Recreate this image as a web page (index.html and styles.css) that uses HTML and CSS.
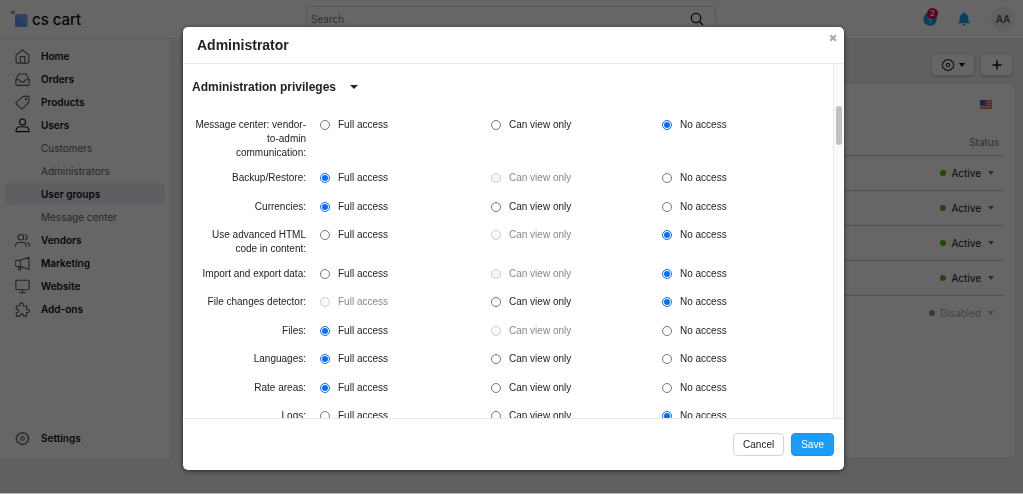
FILE: index.html
```html
<!DOCTYPE html>
<html lang="en">
<head>
  <meta charset="UTF-8" />
  <meta name="viewport" content="width=device-width, initial-scale=1.0" />
  <title>User groups - Administrator</title>
  <link rel="stylesheet" href="styles.css">
</head>
<body>
  <header class="topbar">
    <a class="logo" href="#">
      <svg class="logo-mark" viewBox="0 0 17 18" aria-hidden="true">
        <defs>
          <linearGradient id="mark" x1="0" y1="1" x2="1" y2="0">
            <stop offset="0" stop-color="#6287f5" />
            <stop offset="1" stop-color="#7cb8f8" />
          </linearGradient>
        </defs>
        <rect x="4" y="4" width="12.5" height="13" rx="1.5" fill="url(#mark)" />
        <circle cx="2" cy="2.3" r="1.9" fill="#6d8ffa" />
      </svg>
      <span>cs cart</span>
    </a>
    <form class="search">
      <input type="text" placeholder="Search" aria-label="Search" />
      <svg class="search-icon" viewBox="0 0 14 14" aria-hidden="true"><circle cx="6" cy="6" r="4.7" /><path d="M9.5 9.5l3.5 3.5" /></svg>
    </form>
    <div class="top-actions">
      <button class="icon-btn" aria-label="Help">
        <svg width="14" height="14" viewBox="0 0 14 14" aria-hidden="true">
          <circle cx="7" cy="7" r="6.7" fill="#1b9bf0" />
          <path d="M5.3 5.6a1.8 1.8 0 1 1 2.6 1.6c-.7.4-.9.6-.9 1.2M7 9.8v1.2" fill="none" stroke="#fff" stroke-width="1.3" />
        </svg>
        <span class="badge">2</span>
      </button>
      <button class="icon-btn" aria-label="Notifications">
        <svg width="12" height="14" viewBox="0 0 12 14" aria-hidden="true">
          <path d="M6 .5c.6 0 1 .4 1 1v.3c1.9.4 3.2 1.9 3.2 3.9 0 2.6.5 3.6 1.6 4.7v.8H.2v-.8c1.1-1.1 1.6-2.1 1.6-4.7 0-2 1.3-3.5 3.2-3.9v-.3c0-.6.4-1 1-1zM4.5 12h3c-.1.9-.7 1.5-1.5 1.5S4.6 12.900 4.500 12z" fill="#1b9bf0" />
        </svg>
      </button>
      <button class="avatar">AA</button>
    </div>
  </header>

  <div class="layout">
    <nav class="sidebar">
      <a class="nav-item" href="#"><svg viewBox="0 0 14 14"><path d="M1 5.600L7 .8l6 4.800v6.200a1.400 1.400 0 0 1-1.400 1.400H2.400A1.400 1.400 0 0 1 1 11.800zM4.900 13V7h4.200V13" /></svg>Home</a>
      <a class="nav-item" href="#"><svg viewBox="0 0 14 14"><path d="M.8 7.200h3.400l1.200 2h3.200l1.200-2h3.400M3.500 1.800h7l2.700 5.400v4a1.300 1.300 0 0 1-1.300 1.300H2.100a1.300 1.300 0 0 1-1.300-1.300v-4z" /></svg>Orders</a>
      <a class="nav-item" href="#"><svg viewBox="0 0 14 14"><path d="M7.600 1.300L13 1v5.500l-5.800 6.300a1 1 0 0 1-1.400 0L1.200 8.300a1 1 0 0 1 0-1.400z" /><circle cx="10.200" cy="3.900" r=".5" /></svg>Products</a>
      <a class="nav-item dark" href="#"><svg viewBox="0 0 14 14"><circle cx="7" cy="3.800" r="2.800" /><path d="M.9 12.700c0-3 1.500-4.600 4-4.600h4.200c2.500 0 4 1.600 4 4.600z" /></svg>Users</a>
      <a class="nav-sub" href="#">Customers</a>
      <a class="nav-sub" href="#">Administrators</a>
      <a class="nav-sub active" href="#">User groups</a>
      <a class="nav-sub" href="#">Message center</a>
      <a class="nav-item" href="#"><svg viewBox="0 0 14 14"><circle cx="5.500" cy="4" r="2.600" /><path d="M.5 12.800v-.9a3 3 0 0 1 3-3h4a3 3 0 0 1 3 3v.9M9.200 1.400a2.600 2.600 0 0 1 0 5.100M11.600 9.100c1.300.4 2.100 1.500 2.100 2.800v.9" /></svg>Vendors</a>
      <a class="nav-item" href="#"><svg viewBox="0 0 14 14"><path d="M5 4l8-2.800v11.400L5 9.800M5 4v5.800M5 4H2.900a2.900 2.900 0 0 0 0 5.800H5M3 9.800l.8 2.900h1.700L5 9.800" /></svg>Marketing</a>
      <a class="nav-item" href="#"><svg viewBox="0 0 14 14"><rect x=".8" y="1.200" width="12.400" height="8.800" rx="1" /><path d="M7 10v2.800M3.800 12.800h6.400" /></svg>Website</a>
      <a class="nav-item" href="#"><svg viewBox="0 0 14 14"><path d="M1.200 3.800h3.300c-.6-1.800.3-3 1.500-3s2.100 1.200 1.500 3h3.300v3.100c1.500-.5 2.600.2 2.600 1.400s-1.100 1.900-2.600 1.400v3.500H8c.4-1.500-.3-2.200-1.500-2.200s-1.900.7-1.500 2.200H1.200V9.700c1.500.4 2.200-.3 2.200-1.400S2.700 6.500 1.200 6.900z" /></svg>Add-ons</a>
      <a class="nav-item settings" href="#"><svg viewBox="0 0 14 14"><path d="M7 1l1.200 1.400L10 1.800l.5 1.800 1.800.4-.4 1.800L13.200 7l-1.300 1.200.4 1.800-1.800.4-.5 1.800-1.800-.5L7 13.100l-1.200-1.400-1.800.5-.5-1.800-1.800-.4.400-1.800L.8 7l1.300-1.200L1.700 4l1.800-.4L4 1.800l1.800.6z" /><circle cx="7" cy="7" r="1.700" /></svg>Settings</a>
    </nav>

    <main class="content">
      <div class="toolbar">
        <button class="tool-btn" aria-label="Tools">
          <svg width="14" height="14" viewBox="0 0 14 14"><path d="M7 1l1.200 1.400L10 1.800l.5 1.800 1.800.4-.4 1.800L13.200 7l-1.300 1.200.4 1.800-1.800.4-.5 1.800-1.800-.5L7 13.100l-1.200-1.400-1.800.5-.5-1.800-1.800-.4.400-1.800L.8 7l1.300-1.200L1.700 4l1.800-.4L4 1.800l1.800.6z" /><circle cx="7" cy="7" r="1.700" /></svg>
          <span class="caret"></span>
        </button>
        <button class="tool-btn add" aria-label="Add user group">
          <svg width="10" height="10" viewBox="0 0 10 10"><path d="M5 .5v9M.5 5h9" /></svg>
        </button>
      </div>
      <section class="panel">
        <div class="panel-lang">
          <svg width="12" height="9" viewBox="0 0 12 9" role="img" aria-label="English">
            <rect width="12" height="9" fill="#e8b0b0" />
            <path d="M0 .7h12M0 3.200h12M0 5.700h12M0 8.300h12" stroke="#d9605a" stroke-width="1.200" />
            <rect width="6" height="5" fill="#3f62b8" />
          </svg>
        </div>
        <table class="groups">
          <thead><tr><th>Status</th></tr></thead>
          <tbody>
            <tr><td><button class="status"><i class="dot"></i>Active<span class="caret"></span></button></td></tr>
            <tr><td><button class="status"><i class="dot"></i>Active<span class="caret"></span></button></td></tr>
            <tr><td><button class="status"><i class="dot"></i>Active<span class="caret"></span></button></td></tr>
            <tr><td><button class="status"><i class="dot"></i>Active<span class="caret"></span></button></td></tr>
            <tr><td><button class="status off"><i class="dot"></i>Disabled<span class="caret"></span></button></td></tr>
          </tbody>
        </table>
      </section>
    </main>
  </div>

  <div class="overlay">
    <div class="modal" role="dialog" aria-labelledby="modal-title">
      <div class="modal-header">
        <h3 id="modal-title">Administrator</h3>
        <button class="close" aria-label="Close"><svg width="8" height="8" viewBox="0 0 8 8"><path d="M1.200 1.200l5.600 5.600M6.800 1.200L1.200 6.800" /></svg></button>
      </div>
      <div class="modal-body">
        <div class="scroll-area">
          <h4>Administration privileges <span class="caret"></span></h4>
          <div id="privileges" class="privileges"></div>
        </div>
        <div class="scroll-track"><div class="scroll-thumb"></div></div>
      </div>
      <div class="modal-footer">
        <button class="btn">Cancel</button>
        <button class="btn btn-primary">Save</button>
      </div>
    </div>
  </div>

  <script src="script.js"></script>
</body>
</html>
```
FILE: styles.css
```css
* { box-sizing: border-box; }
body { margin: 0; height: 100vh; overflow: hidden; display: flex; flex-direction: column; background: #ecf0f5; color: #111; font-family: Inter, "Liberation Sans", sans-serif; font-size: 10px; }
button, input { font-family: inherit; font-size: inherit; color: inherit; }
button { cursor: pointer; }
a { color: inherit; text-decoration: none; }
h3, h4 { margin: 0; }
.caret { display: inline-block; border: 3px solid transparent; border-top: 4px solid; border-bottom: 0; }

/* top bar */
.topbar { flex: none; display: flex; align-items: center; height: 39px; padding: 0 8px 0 11px; background: #fff; border-bottom: 1px solid #e2e6eb; }
.logo { display: flex; align-items: center; gap: 4px; width: 295px; font-size: 15px; font-weight: 500; }
.logo-mark { width: 17px; height: 18px; }
.search { flex: 1; max-width: 410px; position: relative; align-self: stretch; padding-top: 6px; }
.search input { width: 100%; height: 26px; padding: 0 4px; border: 1px solid #d5dae1; border-radius: 4px; background: #fff; outline: none; }
.search input::placeholder { color: #777; opacity: 1; }
.search-icon { position: absolute; right: 12px; top: 12px; width: 14px; height: 14px; fill: none; stroke: #111; stroke-width: 1.3; }
.top-actions { display: flex; align-items: center; gap: 21px; margin-left: auto; }
.icon-btn { position: relative; display: flex; padding: 0; border: 0; background: none; }
.badge { position: absolute; left: 4px; top: -4px; width: 11px; height: 11px; border-radius: 50%; background: #e5004c; color: #fff; font-size: 8px; line-height: 11px; font-weight: 600; text-align: center; }
.avatar { width: 24px; height: 24px; padding: 0; border: 0; border-radius: 50%; background: #eceff3; color: #555; font-weight: 600; }

/* side menu */
.layout { flex: 1; display: flex; min-height: 0; }
.sidebar { width: 170px; margin-bottom: 35px; padding: 6px 5px 10px; display: flex; flex-direction: column; gap: 1px; background: #fff; }
.nav-item, .nav-sub { display: flex; align-items: center; height: 22px; border-radius: 4px; }
.nav-item { gap: 11px; padding-left: 10px; font-weight: 600; }
.nav-item svg { width: 15px; height: 15px; }
.nav-item svg, .tool-btn svg { fill: none; stroke: #555; stroke-width: 1; stroke-linejoin: round; }
.nav-item.dark svg, .tool-btn svg { stroke: #111; }
.nav-sub { padding-left: 36px; color: #666; }
.nav-sub.active { background: #e9eef4; color: #111; font-weight: 600; }
.settings { margin-top: auto; }

/* user groups list */
.content { flex: 1; display: flex; flex-direction: column; padding: 14px 7px 35px 16px; }
.toolbar { display: flex; justify-content: flex-end; gap: 5px; padding-right: 3px; margin-bottom: 7px; }
.tool-btn { display: flex; align-items: center; justify-content: center; gap: 4px; width: 44px; height: 23px; padding: 0; border: 1px solid #d5dae1; border-radius: 4px; background: #fff; box-shadow: 0 1px 1px #bcc3cc; }
.tool-btn.add { width: 33px; }
.tool-btn.add svg { stroke-width: 1.5; }
.panel { flex: 1; padding: 16px 11px 0; border: 1px solid #dde2e8; border-radius: 5px; background: #fff; }
.panel-lang { display: flex; justify-content: flex-end; height: 30px; padding-right: 12px; }
.groups { width: 100%; border-collapse: collapse; }
.groups th, .groups td { padding: 0; text-align: right; border-bottom: 1px solid #ccc; }
.groups th { height: 25px; padding-right: 5px; color: #777; font-weight: 400; }
.groups td { height: 35px; padding-right: 10px; }
.groups tbody tr:last-child td { border-bottom: 0; }
.status { display: inline-flex; align-items: center; gap: 5px; padding: 0; border: 0; background: none; }
.status .dot { width: 6px; height: 6px; border-radius: 50%; background: #51b51d; }
.status .caret { margin-left: 2px; color: #777; }
.status.off, .status.off .caret { color: #aaa; }
.status.off .dot { background: #888; }

/* modal */
.overlay { position: fixed; inset: 0; display: flex; padding: 27px 179px 23px 183px; background: rgba(0,0,0,0.6); border-bottom: 1px solid #b5b3b5; }
.modal { flex: 1; min-width: 0; display: flex; flex-direction: column; border-radius: 5px; background: #fff; box-shadow: 0 1px 5px rgba(0,0,0,0.6); color: #222; font-family: "Liberation Sans", Arial, sans-serif; line-height: 14px; }
.modal-header { display: flex; justify-content: space-between; align-items: center; height: 37px; padding: 0 7px 0 14px; border-bottom: 1px solid #e8e8e8; }
.modal-header h3 { font-size: 14px; }
.close { align-self: flex-start; display: flex; margin-top: 7px; padding: 0; border: 0; background: none; }
.close svg { fill: none; stroke: #aaa; stroke-width: 2.2; }
.modal-body { flex: 1; min-height: 0; display: flex; }
.scroll-area { flex: 1; overflow: hidden; padding: 14px 0 0 9px; }
.scroll-area h4 { display: flex; align-items: center; gap: 14px; height: 18px; font-size: 12px; }
.scroll-area h4 .caret { border-width: 4px 4px 0; }
.scroll-track { width: 11px; padding: 42px 2px 0; border-left: 1px solid #e8e8e8; background: #fafafa; }
.scroll-thumb { width: 6px; height: 39px; border-radius: 3px; background: #c1c1c1; }
.privileges { display: flex; flex-direction: column; gap: 11px; padding-top: 22px; }
.privilege { display: grid; grid-template-columns: 114px 1fr; gap: 14px; align-items: start; min-height: 17px; }
.privilege:nth-child(even) { min-height: 18px; }
.privilege-name { padding-left: 3px; text-align: right; }
.privilege-options { display: grid; grid-template-columns: repeat(3, 1fr); }
.privilege label { display: flex; align-items: center; gap: 8px; }
.privilege input { width: 10px; height: 10px; margin: 0; accent-color: #0a6cff; }
.privilege label.disabled { color: #888; }
.modal-footer { display: flex; justify-content: flex-end; gap: 7px; height: 52px; padding: 14px 10px 0; border-top: 1px solid #e8e8e8; }
.btn { height: 23px; padding: 0 9px; border: 1px solid #cfd5e3; border-radius: 4px; background: #fff; }
.btn-primary { border-color: #1b93ee; background: #1d9df8; color: #fff; }
```
FILE: script.js
```js
const access = ['Full access', 'Can view only', 'No access'];

// checked: index of the selected option, disabled: index of the unavailable one
const privileges = [
  { name: 'Message center: vendor-to-admin communication', checked: 2 },
  { name: 'Backup/Restore', checked: 0, disabled: 1 },
  { name: 'Currencies', checked: 0 },
  { name: 'Use advanced HTML code in content', checked: 2, disabled: 1 },
  { name: 'Import and export data', checked: 2, disabled: 1 },
  { name: 'File changes detector', checked: 2, disabled: 0 },
  { name: 'Files', checked: 0, disabled: 1 },
  { name: 'Languages', checked: 0 },
  { name: 'Rate areas', checked: 0 },
  { name: 'Logs', checked: 2 }
];

function renderPrivileges() {
  const list = document.getElementById('privileges');
  privileges.forEach((item, row) => {
    const div = document.createElement('div');
    div.className = 'privilege';
    div.setAttribute('role', 'radiogroup');
    div.setAttribute('aria-labelledby', `privilege-${row}`);
    const options = access.map((text, i) => `
      <label class="${item.disabled === i ? 'disabled' : ''}">
        <input type="radio" name="access-${row}" ${item.checked === i ? 'checked' : ''} ${item.disabled === i ? 'disabled' : ''} />${text}
      </label>`).join('');
    div.innerHTML = `<div class="privilege-name" id="privilege-${row}">${item.name}:</div><div class="privilege-options">${options}</div>`;
    list.appendChild(div);
  });
}

renderPrivileges();
```
